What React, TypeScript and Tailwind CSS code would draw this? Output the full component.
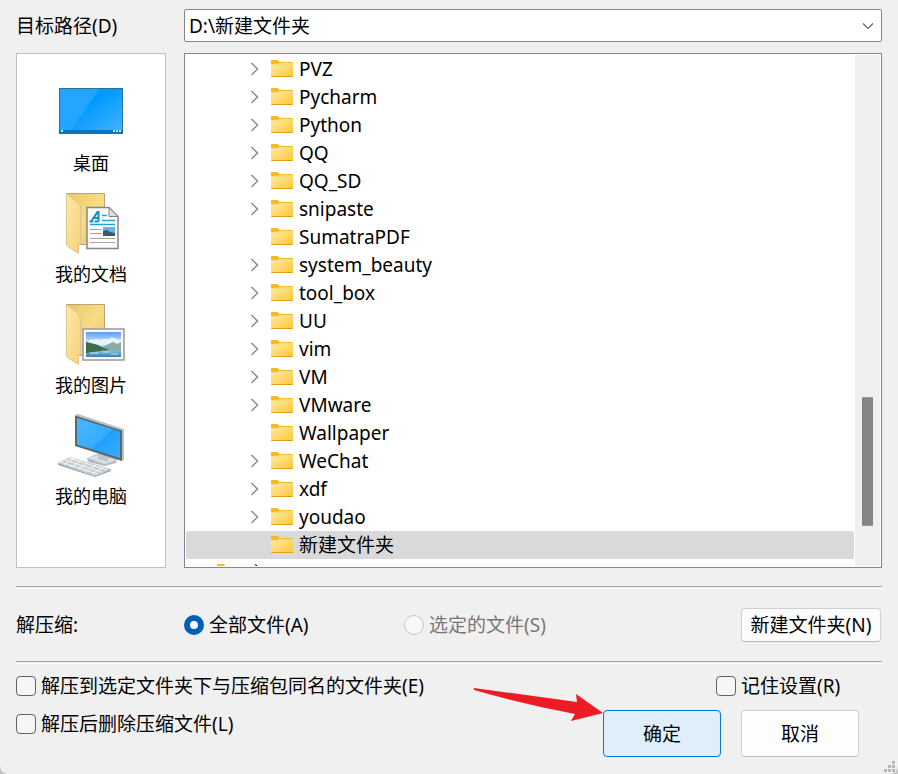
import { useState } from 'react'
import type { ReactNode } from 'react'

type Folder = { name: string; expandable: boolean }

const folders: Folder[] = [
  { name: 'PVZ', expandable: true },
  { name: 'Pycharm', expandable: true },
  { name: 'Python', expandable: true },
  { name: 'QQ', expandable: true },
  { name: 'QQ_SD', expandable: true },
  { name: 'snipaste', expandable: true },
  { name: 'SumatraPDF', expandable: false },
  { name: 'system_beauty', expandable: true },
  { name: 'tool_box', expandable: true },
  { name: 'UU', expandable: true },
  { name: 'vim', expandable: true },
  { name: 'VM', expandable: true },
  { name: 'VMware', expandable: true },
  { name: 'Wallpaper', expandable: false },
  { name: 'WeChat', expandable: true },
  { name: 'xdf', expandable: true },
  { name: 'youdao', expandable: true },
  { name: '新建文件夹', expandable: false },
]

function FolderIcon() {
  return (
    <svg width="22" height="18" viewBox="0 0 22 18" className="shrink-0" aria-hidden="true">
      <defs>
        <linearGradient id="folderFace" x1="0" y1="0" x2="1" y2="1">
          <stop offset="0" stopColor="#ffe9a3" />
          <stop offset="1" stopColor="#ffc937" />
        </linearGradient>
      </defs>
      <path d="M0 1Q0 0 1 0H6.500L8.500 2H21Q22 2 22 3V5H0Z" fill="#f5b92a" />
      <path d="M0 4.200H6.200L8.400 3H22V16Q22 17 21 17H1Q0 17 0 16Z" fill="url(#folderFace)" />
      <path d="M0 1Q0 0 1 0H6.500L8.500 2V2.500L6.500 4H0Z" fill="#fbba1c" />
      <path d="M0 15.600V16Q0 17 1 17H21Q22 17 22 16V15.600Q22 16 21 16H1Q0 16 0 15.600Z" fill="#e2a01c" />
    </svg>
  )
}

function DesktopIcon() {
  return (
    <svg width="64" height="64" viewBox="0 0 64 64" aria-hidden="true">
      <defs>
        <linearGradient id="desk" x1="0" y1="0" x2="1" y2="1">
          <stop offset="0.4" stopColor="#0099ff" />
          <stop offset="1" stopColor="#45b4ff" />
        </linearGradient>
      </defs>
      <rect x="0.5" y="9.5" width="63" height="45" fill="url(#desk)" stroke="#28719f" />
      <path d="M1 10H40L12 52H1Z" fill="#23a6ff" />
      <rect x="1" y="51" width="62" height="3" fill="#0a75bf" />
      <path d="M2 51h2v2h-2zM54 51h2v2h-2zM57 51h2v2h-2zM60 51h2v2h-2z" fill="#bfe6fc" />
    </svg>
  )
}

function OpenFolder() {
  return (
    <>
      <defs>
        <linearGradient id="back" x1="0" y1="0" x2="1" y2="1">
          <stop offset="0" stopColor="#e9c764" />
          <stop offset="0.5" stopColor="#f8dc84" />
          <stop offset="1" stopColor="#e6c262" />
        </linearGradient>
        <linearGradient id="flap" x1="0" y1="0" x2="1" y2="1">
          <stop offset="0" stopColor="#ffe9a6" />
          <stop offset="1" stopColor="#f5d07a" />
        </linearGradient>
      </defs>
      <path d="M7.5 3.5H45.5V54.5H14Z" fill="url(#back)" stroke="#b9a678" />
      <path d="M7.5 3.5L20 14Q21.500 15 21.500 17V54H19.500V63.500L8.500 56.500Q7.500 56 7.500 54Z" fill="url(#flap)" stroke="#dcc68e" />
    </>
  )
}

function DocumentsIcon() {
  return (
    <svg width="64" height="64" viewBox="0 0 64 64" aria-hidden="true">
      <OpenFolder />
      <path d="M28 17.500H50L59 26.500V58.500H28Z" fill="#fcfcfc" stroke="#858585" strokeWidth="1.500" />
      <path d="M50 17.500V26.500H59Z" fill="#dedede" stroke="#858585" />
      <path d="M30.500 31.500h3.500M35.500 31.500h4M32.500 31L38.500 22H39.500V31.500M34.500 28H39" fill="none" stroke="#168bca" strokeWidth="2" />
      <path d="M43 25.500h5M43 30.500h13M31 34.500h25" stroke="#24a0dd" strokeWidth="1.500" />
      <path d="M31 39.500h12M31 43.500h12M31 48.500h25M31 52.500h25" stroke="#a5a5a5" />
      <rect x="44" y="37" width="12" height="9" fill="#6aadef" />
      <path d="M44 41l4 -1 3 2 5 1v3h-12z" fill="#365d68" />
    </svg>
  )
}

function PicturesIcon() {
  return (
    <svg width="64" height="64" viewBox="0 0 64 64" className="overflow-visible" aria-hidden="true">
      <defs>
        <linearGradient id="sky" x1="0" y1="0" x2="0" y2="1">
          <stop offset="0" stopColor="#5d9cf3" />
          <stop offset="0.5" stopColor="#d9effc" />
          <stop offset="0.75" stopColor="#82b7d5" />
          <stop offset="1" stopColor="#3a80b0" />
        </linearGradient>
      </defs>
      <OpenFolder />
      <rect x="24" y="28" width="41" height="31" fill="#f9f9f9" stroke="#999" strokeWidth="1.500" />
      <rect x="27" y="31" width="35" height="25" fill="url(#sky)" />
      <path d="M29 40q3 -3 6 -1q3 -3 6 0q4 -2 8 -1q4 -3 9 0l4 1v4H29Z" fill="#e6f4fd" />
      <path d="M43 46L54 41L58 43L62 41V49H43Z" fill="#8ea8a6" />
      <path d="M27 41L32 42L39 44L45 47L51 49L41 50L27 52Z" fill="#3d6b4c" />
      <path d="M31 52h9M43 51h8M52 53h7" stroke="#c5e3ef" />
    </svg>
  )
}

function ComputerIcon() {
  return (
    <svg width="64" height="64" viewBox="0 0 64 64" className="overflow-visible" aria-hidden="true">
      <defs>
        <linearGradient id="screen" x1="0" y1="0" x2="1" y2="1">
          <stop offset="0" stopColor="#49b8fc" />
          <stop offset="0.550" stopColor="#35adfb" />
          <stop offset="0.560" stopColor="#1fa0fa" />
          <stop offset="1" stopColor="#38aeff" />
        </linearGradient>
      </defs>
      <path d="M28 46L38 42L58 47L57 51L46 54L29 50Z" fill="#aebbc4" />
      <path d="M28 46L39 43L58 48L46 52Z" fill="#dce3e7" />
      <path d="M39 41L49 44V50L39 47Z" fill="#bcc7cf" />
      <path d="M16 3L19 2L65 17V48L62 49Z" fill="#b9c3ca" />
      <path d="M16 3.500L63 18.500V49L16 34Z" fill="#5c666e" />
      <path d="M18 6L61 19.500V46L18 32.500Z" fill="url(#screen)" />
      <path d="M-1 51L11 45L52 57L36 64Z" fill="#c6cdd2" />
      <path d="M-1 51L36 64L52 57V59L36 65L-1 53Z" fill="#9da6ad" />
      <path d="M2 50L39 62M6 48L43 60M10 46L48 58M5 53L15 46M12 55L23 48M19 57L30 50M26 60L37 53M33 62L44 55" stroke="#f5f7f8" />
    </svg>
  )
}

const places: { label: string; icon: ReactNode }[] = [
  { label: '桌面', icon: <DesktopIcon /> },
  { label: '我的文档', icon: <DocumentsIcon /> },
  { label: '我的图片', icon: <PicturesIcon /> },
  { label: '我的电脑', icon: <ComputerIcon /> },
]

function Divider() {
  return <hr className="h-[3px] border-0 border-t border-b border-t-[#a0a0a0] border-b-white" />
}

function CheckOption({ label, className = '' }: { label: string; className?: string }) {
  return (
    <label className={`flex h-7 items-center gap-[5px] whitespace-nowrap ${className}`}>
      <input
        type="checkbox"
        className="size-5 shrink-0 appearance-none rounded border border-[#626262] bg-[#f5f5f5] checked:bg-[#005fb8]"
      />
      {label}
    </label>
  )
}

export default function App() {
  const [selected, setSelected] = useState('新建文件夹')
  const [scope, setScope] = useState('all')

  return (
    <div className="bg-[#c4c4c4]">
      <main className="relative flex h-screen min-h-[600px] flex-col overflow-hidden rounded-bl-lg rounded-br-lg bg-[#f0f0f0] px-4 pt-[9px] pb-[17px] font-['Noto_Sans','Noto_Sans_CJK_SC',sans-serif] text-[19px] leading-7 text-black">
        <div className="flex h-[33px] items-center">
          <label htmlFor="path" className="w-[168px] shrink-0">
            目标路径(D)
          </label>
          <div className="relative h-full flex-1">
            <select
              id="path"
              className="h-full w-full appearance-none rounded-xs border border-[#868686] bg-white pl-1 leading-7"
            >
              <option>D:\新建文件夹</option>
            </select>
            <svg
              width="12"
              height="7"
              viewBox="0 0 12 7"
              className="pointer-events-none absolute top-[14px] right-2"
              aria-hidden="true"
            >
              <path d="M1 0.500L6 5.500L11 0.500" fill="none" stroke="#606060" strokeWidth="1.200" />
            </svg>
          </div>
        </div>

        <div className="mt-[11px] flex min-h-0 flex-1 gap-[18px]">
          <nav className="flex w-[150px] shrink-0 flex-col items-center gap-[15px] border border-[#c0c0c0] bg-white pt-[25px]">
            {places.map((place) => (
              <button key={place.label} type="button" className="flex flex-col items-center gap-2 text-lg leading-6">
                {place.icon}
                {place.label}
              </button>
            ))}
          </nav>

          <div className="flex min-w-0 flex-1 gap-px overflow-hidden border border-[#828790] bg-white p-px">
            <ul role="tree" className="min-w-0 flex-1 overflow-hidden">
              {folders.map((folder) => (
                <li
                  key={folder.name}
                  role="treeitem"
                  aria-selected={selected === folder.name}
                  onClick={() => setSelected(folder.name)}
                  className={`flex h-7 items-center rounded-xs pl-16 ${selected === folder.name ? 'bg-[#d9d9d9]' : ''}`}
                >
                  <span className="flex w-[21px] shrink-0">
                    {folder.expandable && (
                      <svg width="9" height="14" viewBox="0 0 9 14" aria-hidden="true">
                        <path d="M1.500 1L7.500 7L1.500 13" fill="none" stroke="#8c8c8c" strokeWidth="1.500" />
                      </svg>
                    )}
                  </span>
                  <FolderIcon />
                  <span className="pl-[6px]">{folder.name}</span>
                </li>
              ))}
              <li role="treeitem" aria-selected={false} className="flex h-7 items-start pt-[5px] pl-[31px]">
                <FolderIcon />
                <svg width="22" height="17" viewBox="0 0 22 17" className="ml-3" aria-hidden="true">
                  <path d="M3 0l3 1v2z" fill="#111" />
                </svg>
              </li>
            </ul>
            <div className="flex w-[25px] shrink-0 flex-col items-center bg-[#f0f0f0]">
              <div className="grow-[342]" />
              <div className="w-[11px] grow-[127] border-y border-[#9a9a9a] bg-[#858585]" />
              <div className="grow-[40]" />
            </div>
          </div>
        </div>

        <div className="mt-[18px]">
          <Divider />
        </div>
        <div className="flex h-[72px] items-center">
          <span className="w-[168px] shrink-0">解压缩:</span>
          <label className="flex w-[220px] shrink-0 items-center gap-[5px]">
            <input
              type="radio"
              name="scope"
              checked={scope === 'all'}
              onChange={() => setScope('all')}
              className="size-5 appearance-none rounded-full border border-[#868686] bg-white checked:border-[6px] checked:border-[#005fb8]"
            />
            全部文件(A)
          </label>
          <label className="flex items-center gap-[5px] text-[#777]">
            <input
              type="radio"
              name="scope"
              disabled
              className="size-5 appearance-none rounded-full border border-[#c6c6c6] bg-[#f8f8f8]"
            />
            选定的文件(S)
          </label>
          <button
            type="button"
            className="mr-px ml-auto h-[34px] w-[140px] rounded border border-[#d0d0d0] border-b-[#bababa] bg-[#fdfdfd] whitespace-nowrap"
          >
            新建文件夹(N)
          </button>
        </div>
        <Divider />

        <div className="mt-2 flex justify-between pr-[23px]">
          <div className="flex flex-col gap-[10px]">
            <CheckOption label="解压到选定文件夹下与压缩包同名的文件夹(E)" />
            <CheckOption label="解压后删除压缩文件(L)" />
          </div>
          <div className="flex flex-col items-end gap-[10px]">
            <CheckOption label="记住设置(R)" className="w-[143px]" />
            <div className="flex gap-5">
              <div className="relative">
                <button
                  type="button"
                  className="h-[47px] w-[118px] rounded border border-[#0078d4] bg-[#e0eef9]"
                >
                  确定
                </button>
                <svg
                  width="130"
                  height="36"
                  viewBox="0 0 130 36"
                  className="pointer-events-none absolute -top-6 right-full"
                  aria-hidden="true"
                >
                  <path d="M1 2L104 16L103 8L130 27L98 35L102 28Q50 18 1 4Z" fill="#ed1c24" />
                </svg>
              </div>
              <button
                type="button"
                className="h-[47px] w-[118px] rounded border border-[#d0d0d0] border-b-[#bababa] bg-[#fdfdfd]"
              >
                取消
              </button>
            </div>
          </div>
        </div>

        <svg width="14" height="13" viewBox="0 0 14 13" className="absolute right-0 bottom-0" aria-hidden="true">
          <path d="M8 0h3v3h-3zM4 4h3v3h-3zM8 4h3v3h-3zM0 8h3v3h-3zM4 8h3v3h-3zM8 8h3v3h-3z" fill="#b8b8b8" />
        </svg>
      </main>
    </div>
  )
}
